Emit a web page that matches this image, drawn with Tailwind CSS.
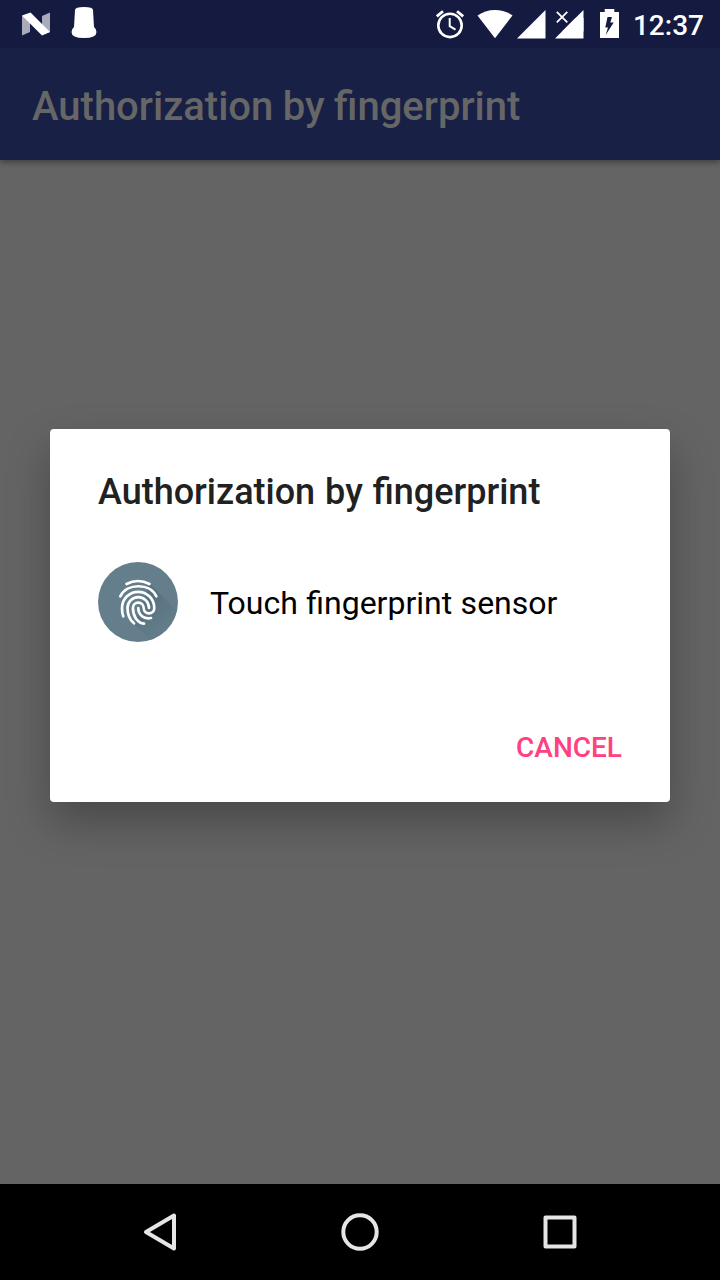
<!DOCTYPE html>
<html lang="en">
<head>
<meta charset="utf-8">
<title>Authorization by fingerprint</title>
<script src="https://cdn.jsdelivr.net/npm/@tailwindcss/browser@4"></script>
</head>
<body class="h-[1280px] w-[720px] overflow-hidden bg-[#646464] font-[Roboto,sans-serif]">
<div class="relative flex h-full flex-col">
  <header class="bg-[#192046] shadow-[0_2px_6px_rgba(0,0,0,0.4)]">
    <div class="flex h-12 items-center justify-between bg-[#141a40] pr-4">
      <svg class="h-12 w-[120px]" viewBox="0 0 120 48">
        <path d="M22 16L30 13V32L22 35.500ZM42 16L50 12.500V32L42 35Z" fill="#a9abbb"/>
        <path d="M22 15.500L30.500 12.500L50 32L42 35.500Z" fill="#fff"/>
        <path d="M75 10Q75 7 84 7T93 10L94 27Q96.500 29 96.500 32Q96.500 38 84 38T71.500 32Q71.500 29 74 27Z" fill="#fff"/>
      </svg>
      <div class="flex items-center">
        <svg class="h-12 w-[200px]" viewBox="429 0 200 48" fill="#fff">
          <g fill="none" stroke="#fff"><circle cx="450" cy="25.400" r="11.700" stroke-width="2.600"/><path d="M436.800 16.400L443 11.200M463.200 16.400L457 11.200" stroke-width="2.800"/><path d="M449.700 18V26.200L455.500 29.700" stroke-width="2"/></g>
          <path d="M495 38.300L477.500 15.500Q485 9.900 495 9.900T512.500 15.500Z"/>
          <path d="M517 38.500L545.500 10V38.500Z"/>
          <path d="M555 38.500L583.500 10V38.500Z"/>
          <path d="M555 10H569V23L564 29L555 24Z" fill="#141a40"/>
          <path d="M562 31.500L575.500 18H583.500V31.500Z"/>
          <path d="M556.800 11.800L567.300 22.300M567.300 11.800L556.800 22.300" stroke="#fff" stroke-width="1.800"/>
          <path fill-rule="evenodd" d="M600 12H604.700V9H614.300V12H619V38H600ZM607.500 17H612L610.300 22.500H613.700L605.700 35L608 27.500H605.300Z"/>
        </svg>
        <span class="pt-[3px] pl-1 text-[28px] leading-none font-medium text-white">12:37</span>
      </div>
    </div>
    <div class="flex h-28 items-center px-8 pt-[6px]">
      <h1 class="text-[40px] leading-none font-medium text-[#666] [word-spacing:-0.5px]">Authorization by fingerprint</h1>
    </div>
  </header>
  <main class="flex-1"></main>
  <nav class="flex h-24 items-center justify-center gap-[140px] bg-black">
    <svg class="h-[60px] w-[60px]" viewBox="0 0 60 60" fill="none" stroke="#e6e6e6" stroke-width="4" stroke-linejoin="round"><path d="M16 30L44 13.500V46.500Z"/></svg>
    <svg class="h-[60px] w-[60px]" viewBox="0 0 60 60" fill="none" stroke="#e6e6e6" stroke-width="4"><circle cx="30" cy="30" r="16.700"/></svg>
    <svg class="h-[60px] w-[60px]" viewBox="0 0 60 60" fill="none" stroke="#e6e6e6" stroke-width="4" stroke-linejoin="round"><rect x="15.500" y="15.500" width="29" height="29"/></svg>
  </nav>
  <section role="dialog" class="absolute top-[429px] left-[50px] flex h-[373px] w-[620px] flex-col rounded bg-white px-12 pt-[44px] shadow-[0_20px_44px_rgba(0,0,0,0.27)]">
    <h2 class="text-[36px] leading-[38px] font-medium text-[#212121] [word-spacing:1px]">Authorization by fingerprint</h2>
    <div class="mt-[51px] flex h-20 items-center gap-8">
      <svg class="h-20 w-20" viewBox="0 0 80 80" fill="none">
        <defs>
          <clipPath id="disc"><circle cx="40" cy="40" r="40"/></clipPath>
          <linearGradient id="cast" x1="45" y1="40" x2="66" y2="64" gradientUnits="userSpaceOnUse"><stop stop-color="#526d79"/><stop offset="1" stop-color="#607c88"/></linearGradient>
        </defs>
        <circle cx="40" cy="40" r="40" fill="#647f8b"/>
        <path d="M52 22L88 58V88H62L36 62Z" fill="url(#cast)" opacity=".7" clip-path="url(#disc)"/>
        <g stroke="#fff" stroke-width="2.700" stroke-linecap="round">
          <path d="M28.500 22Q40 16 51.500 22"/>
          <path d="M22.300 34.300C29 20.900 52 20.900 58.300 34.300"/>
          <path d="M25.300 54.300C24 51.500 24 48.500 24 46A16.150 16.200 0 0 1 56.300 46A5.300 5.300 0 0 1 45.700 46A5.400 5.400 0 0 0 34.900 46C35 54 39 60.500 46 61.700"/>
          <path d="M51 46A10.750 10.800 0 0 0 29.500 46C29.500 52.500 32 58 36 61.300"/>
          <path d="M40.300 46C40.300 53 46 57.500 53 56"/>
        </g>
      </svg>
      <p class="pt-[2px] text-[32px] leading-none text-black [word-spacing:0.5px]">Touch fingerprint sensor</p>
    </div>
    <div class="mt-[91px] flex justify-end">
      <button class="text-[28px] leading-[30px] font-medium text-[#ff4081]">CANCEL</button>
    </div>
  </section>
</div>
</body>
</html>
